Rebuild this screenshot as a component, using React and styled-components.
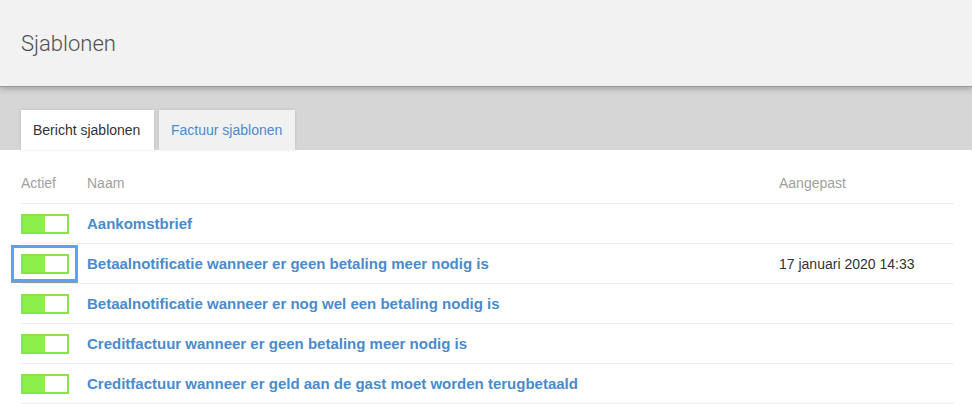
import React from 'react';
import styled, { createGlobalStyle } from 'styled-components';

const GlobalStyle = createGlobalStyle`
	html, body {
		margin: 0;
		padding: 0;
		background: #fff;
		font-family: "Liberation Sans", Arial, sans-serif;
	}
`;

const rows = [
	{ name: 'Aankomstbrief', date: '' },
	{ name: 'Betaalnotificatie wanneer er geen betaling meer nodig is', date: '17 januari 2020 14:33', focused: true },
	{ name: 'Betaalnotificatie wanneer er nog wel een betaling nodig is', date: '' },
	{ name: 'Creditfactuur wanneer er geen betaling meer nodig is', date: '' },
	{ name: 'Creditfactuur wanneer er geld aan de gast moet worden terugbetaald', date: '' },
];

const App = () => {
	return (
		<Page>
			<GlobalStyle />
			<Header>
				<Title>Sjablonen</Title>
			</Header>
			<TabBand>
				<Tab active>Bericht sjablonen</Tab>
				<Tab>Factuur sjablonen</Tab>
			</TabBand>
			<Content>
				<Table>
					<HeadRow>
						<HeadCell>Actief</HeadCell>
						<HeadCell>Naam</HeadCell>
						<HeadCell>Aangepast</HeadCell>
					</HeadRow>
					{rows.map((r) => (
						<Row key={r.name}>
							<ToggleCell>
								<Toggle focused={r.focused}>
									<Knob />
								</Toggle>
							</ToggleCell>
							<NameLink>{r.name}</NameLink>
							<DateCell>{r.date}</DateCell>
						</Row>
					))}
				</Table>
			</Content>
		</Page>
	);
};

export default App;

const Page = styled.div`
	width: 972px;
	height: 404px;
	overflow: hidden;
	background: #fff;
`;

const Header = styled.div`
	height: 86px;
	background: #f2f2f2;
	display: flex;
	align-items: center;
	padding-left: 21px;
	box-sizing: border-box;
	position: relative;
	z-index: 1;
	box-shadow: 0 1px 0 #9a9a9a, 0 3px 6px rgba(0, 0, 0, 0.25);
`;

const Title = styled.h1`
	margin: 0;
	font-family: Roboto, "Liberation Sans", sans-serif;
	font-weight: 300;
	font-size: 22px;
	color: #505050;
`;

const TabBand = styled.div`
	height: 64px;
	background: #d6d6d6;
	display: flex;
	align-items: flex-end;
	gap: 5px;
	padding-left: 21px;
	box-sizing: border-box;
`;

const Tab = styled.div`
	height: 40px;
	display: flex;
	align-items: center;
	padding: 0 12px;
	font-size: 14px;
	background: ${(p) => (p.active ? '#fff' : '#f1f1f1')};
	color: ${(p) => (p.active ? '#333' : '#4a8bd0')};
	box-shadow: 0 0 3px rgba(0, 0, 0, 0.12);
	min-width: ${(p) => (p.active ? '133px' : '136px')};
	box-sizing: border-box;
`;

const Content = styled.div`
	padding: 16px 18px 0 21px;
`;

const Table = styled.div`
	width: 933px;
`;

const HeadRow = styled.div`
	display: grid;
	grid-template-columns: 66px 692px 1fr;
	height: 37px;
	align-items: center;
	border-bottom: 1px solid #ececec;
`;

const HeadCell = styled.div`
	font-size: 14px;
	color: #a0a0a0;
	padding-bottom: 3px;
`;

const Row = styled.div`
	display: grid;
	grid-template-columns: 66px 692px 1fr;
	height: 39px;
	align-items: center;
	border-bottom: 1px solid #eeeeee;
`;

const ToggleCell = styled.div`
	display: flex;
	align-items: center;
`;

const Toggle = styled.div`
	position: relative;
	width: 48px;
	height: 20px;
	box-sizing: border-box;
	border: 2px solid #86e446;
	background: #8df04a;
	display: flex;
	justify-content: flex-end;

	&::after {
		content: '';
		display: ${(p) => (p.focused ? 'block' : 'none')};
		position: absolute;
		left: -12px;
		top: -11px;
		width: 67px;
		height: 37px;
		box-sizing: border-box;
		border: 3px solid #5d9ffa;
		box-shadow: 0 1px 0 rgba(0, 0, 0, 0.4);
	}
`;

const Knob = styled.div`
	width: 22px;
	height: 16px;
	background: #fff;
`;

const NameLink = styled.a`
	font-size: 15px;
	font-weight: bold;
	color: #4a8bcc;
	cursor: pointer;
	white-space: nowrap;
`;

const DateCell = styled.div`
	font-size: 14px;
	color: #333;
`;
